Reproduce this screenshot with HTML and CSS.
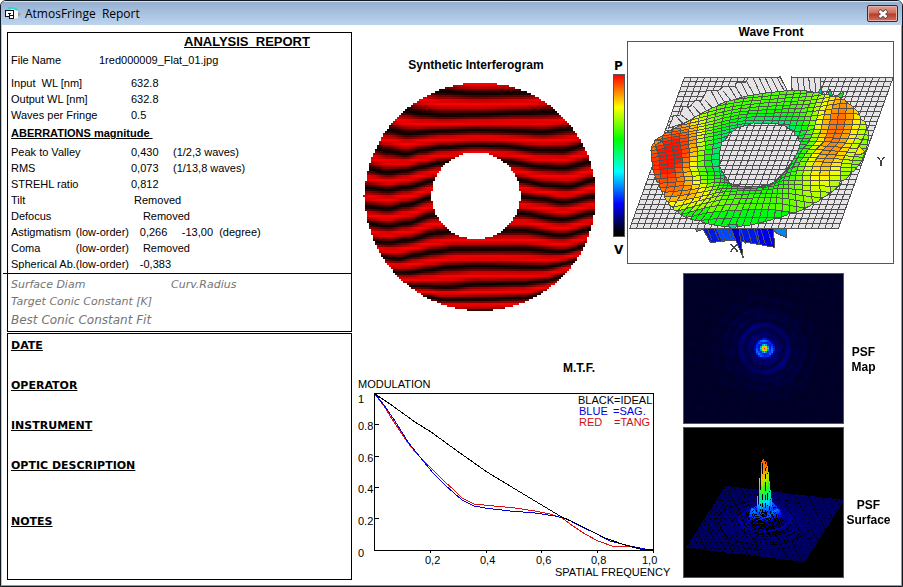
FILE: index.html
```html
<!DOCTYPE html>
<html lang="en">
<head>
<meta charset="utf-8">
<title>AtmosFringe Report</title>
<link rel="stylesheet" href="styles.css">
</head>
<body>
<div class="window">
  <header class="titlebar">
    <svg class="app-icon" viewBox="0 0 16 14" width="16" height="14" aria-hidden="true">
      <path d="M5 3 8 1l5 2v8l-4 1z" fill="#f4f4f4"/>
      <path d="M3 1h5l5 2" stroke="#2fd8dc" stroke-width="2" fill="none"/>
      <path d="M13 5l3 2-3 3z" fill="#9a9a9a"/>
      <path d="M1 4h8v8H5V10H1z" fill="#fff"/>
      <path d="M0 3.500h9M.500 3v7M0 9.500h5M3 6.500h3M8.500 3v9M4.500 6v6M4 11.500h5M5 8.500h3" fill="none" stroke="#111"/>
    </svg>
    <h1 class="title">AtmosFringe&nbsp; Report</h1>
    <button class="close" type="button" aria-label="Close">
      <svg viewBox="0 0 12 10" width="12" height="10" aria-hidden="true">
        <path d="M2 1.500 10 8.500M10 1.500 2 8.500" stroke="#5b4646" stroke-width="4.200"/>
        <path d="M2.500 2 9.500 8M9.500 2 2.500 8" stroke="#fff" stroke-width="2.600"/>
      </svg>
    </button>
  </header>

  <main class="content">
    <div class="sheets">
      <section class="sheet report">
        <h2 class="report-title">ANALYSIS&nbsp; REPORT</h2>
        <table class="data file">
          <tr><th scope="row">File Name</th><td>1red000009_Flat_01.jpg</td></tr>
        </table>
        <table class="data">
          <tr><th scope="row">Input&nbsp; WL [nm]</th><td>632.8</td></tr>
          <tr><th scope="row">Output WL [nm]</th><td>632.8</td></tr>
          <tr><th scope="row">Waves per Fringe</th><td>0.5</td></tr>
        </table>
        <h3 class="sub-title">ABERRATIONS magnitude&nbsp;</h3>
        <table class="data">
          <tr><th scope="row">Peak to Valley</th><td class="num">0,430</td><td>(1/2,3 waves)</td></tr>
          <tr><th scope="row">RMS</th><td class="num">0,073</td><td>(1/13,8 waves)</td></tr>
          <tr><th scope="row">STREHL ratio</th><td class="num">0,812</td><td></td></tr>
          <tr><th scope="row">Tilt</th><td colspan="2">&nbsp;Removed</td></tr>
        </table>
        <table class="data low-order">
          <tr><th scope="row">Defocus</th><td></td><td colspan="2">&nbsp;Removed</td></tr>
          <tr><th scope="row">Astigmatism</th><td class="order">(low-order)</td><td class="num">0,266</td><td>-13,00&nbsp; (degree)</td></tr>
          <tr><th scope="row">Coma</th><td class="order">(low-order)</td><td colspan="2">&nbsp;Removed</td></tr>
          <tr><th scope="row">Spherical Ab.</th><td class="order">(low-order)</td><td colspan="2">-0,383</td></tr>
        </table>
        <div class="conic">
          <p class="conic-row"><span class="diam">Surface Diam</span><span>Curv.Radius</span></p>
          <p class="conic-row">Target Conic Constant [K]</p>
          <p class="conic-row best">Best Conic Constant Fit</p>
        </div>
      </section>
      <section class="sheet notes">
        <h2 class="note">DATE</h2>
        <h2 class="note">OPERATOR</h2>
        <h2 class="note">INSTRUMENT</h2>
        <h2 class="note tall">OPTIC DESCRIPTION</h2>
        <h2 class="note">NOTES</h2>
      </section>
    </div>

    <div class="graphs">
      <section class="interferogram">
        <h2 class="caption">Synthetic Interferogram</h2>
        <canvas id="fringes" width="117" height="116"></canvas>
      </section>
      <div class="scale">
        <span>P</span>
        <div class="ramp"></div>
        <span>V</span>
      </div>
      <section class="wavefront">
        <h2 class="caption">Wave Front</h2>
        <svg id="wave" viewBox="81 63 801 669"></svg>
      </section>

      <section class="mtf">
        <h2 class="caption">M.T.F.</h2>
        <svg class="plot" viewBox="355 376 325 204" width="325" height="204">
          <rect x="374.500" y="393.500" width="279" height="157" fill="none" stroke="#000"/>
          <path d="M374 424.500h5M374 456.500h5M374 487.500h5M374 518.500h5M430.500 550v3M486.500 550v3M541.500 550v3M597.500 550v3M653.500 550v3" stroke="#000"/>
          <g fill="none" shape-rendering="crispEdges">
            <polyline stroke="#e01010" points="375,394 384,406 392,419 400,431 408,443 416,453 424,461 434,471 445,482 454,490 462,498 474,504 484,505 515,508 535,511 550,514 562,518 573,526 585,534 598,541 612,546 630,546 645,549 653,550"/>
            <polyline stroke="#0000d8" points="375,394 384,405 395,421 408,442 420,457 433,473 445,485 454,493 462,500 474,506 485,508 510,511 535,513 555,516 567,519 580,526 595,533 610,541 630,546 645,549 653,550"/>
            <polyline stroke="#000" points="375,394 390,404 415,422 431,432 460,453 487,472 515,489 540,504 560,516 575,523 595,533 605,538 625,545 640,549 653,550"/>
          </g>
          <g class="plot-text">
            <text x="358" y="388">MODULATION</text>
            <text x="358" y="403">1</text>
            <text x="358" y="430">0.8</text>
            <text x="358" y="462">0.6</text>
            <text x="358" y="493">0.4</text>
            <text x="358" y="525">0.2</text>
            <text x="358" y="557">0</text>
            <text x="425" y="564">0,2</text>
            <text x="480" y="564">0,4</text>
            <text x="536" y="564">0,6</text>
            <text x="591" y="564">0,8</text>
            <text x="642" y="564">1,0</text>
            <text x="555" y="576">SPATIAL FREQUENCY</text>
            <text x="578" y="404">BLACK=IDEAL</text>
            <text x="579" y="415" fill="#0000d8">BLUE</text>
            <text x="613" y="415" fill="#0000d8">=SAG.</text>
            <text x="579" y="426" fill="#d01010">RED</text>
            <text x="614" y="426" fill="#d01010">=TANG</text>
          </g>
        </svg>
      </section>

      <section class="psf">
        <div class="psf-row">
          <canvas id="psf-map" width="80" height="75"></canvas>
          <h2 class="caption">PSF<br>Map</h2>
        </div>
        <div class="psf-row">
          <canvas id="psf-surface" width="160" height="149"></canvas>
          <h2 class="caption low">PSF<br>Surface</h2>
        </div>
      </section>
    </div>
  </main>
</div>
<script src="script.js"></script>
</body>
</html>
```
FILE: styles.css
```css
* { box-sizing: border-box; }

body {
  margin: 0;
  background: #fff;
  color: #000;
  font: 11px/16px "Liberation Sans", Arial, sans-serif;
}

h1, h2, h3, p { margin: 0; font-size: inherit; }

.window {
  min-height: 100vh;
  display: flex;
  flex-direction: column;
  border: 1px solid #101820;
  border-radius: 6px 6px 0 0;
  box-shadow: inset -1px -1px 0 #2fc4dc, inset 1px 0 0 #b9c9dd;
  overflow: hidden;
}

.titlebar {
  display: flex;
  align-items: center;
  gap: 4px;
  height: 24px;
  padding: 0 4px;
  background: linear-gradient(#97b0d0, #a9c2e0 50%, #bcd3ec);
  border-top: 1px solid #d5e2f0;
}

.title {
  flex: 1;
  font: 12px/16px "Open Sans", "Noto Sans", sans-serif;
}

.close {
  display: flex;
  align-items: center;
  justify-content: center;
  width: 31px;
  height: 17px;
  padding: 0;
  border: 1px solid #5a1d1c;
  border-radius: 2px;
  background: linear-gradient(#e0a296, #cd6a5a 48%, #b83a28 52%, #d0705c);
  box-shadow: inset 0 0 0 1px #e5b0a6;
}

.content {
  flex: 1;
  display: flex;
  padding: 7px 2px 6px 6px;
}

.sheets {
  display: flex;
  flex-direction: column;
  flex: 0 0 345px;
  gap: 1px;
}

.sheet { border: 1px solid #000; }

.report { padding-top: 1px; }

.report-title {
  padding-left: 176px;
  font-size: 13px;
  line-height: 16px;
  text-decoration: underline;
}

.data {
  border-collapse: collapse;
  margin-left: 3px;
}

.data th, .data td {
  padding: 0;
  height: 16px;
  font-weight: normal;
  text-align: left;
  white-space: pre;
}

.data th { width: 120px; }
.data.file { margin: 2px 0 7px 3px; }
.file th { width: 88px; }
.data .num { width: 42px; }
.low-order th { width: 63px; }
.low-order .order { width: 64px; }

.sub-title {
  margin: 2px 3px;
  line-height: 17px;
  text-decoration: underline;
}

.conic {
  margin: 1px 0 0 -5px;
  border-top: 1px solid #000;
  padding: 2px 0 0 8px;
  color: #747474;
  font: italic 11px/17px "DejaVu Sans", Verdana, sans-serif;
}

.conic-row { display: flex; }
.diam { width: 160px; }
.best { font-size: 12px; line-height: 21px; }

.notes {
  flex: 1;
  padding: 4px 3px;
}

.note {
  height: 40px;
  font: bold 11px/16px "DejaVu Sans", Verdana, sans-serif;
  text-decoration: underline;
}

.note.tall { height: 56px; }

.graphs {
  flex: 1;
  display: grid;
  grid-template-columns: 260px 15px 56px 1fr;
  grid-template-rows: 232px 97px auto;
}

.caption {
  font-size: 12px;
  line-height: 15px;
  text-align: center;
}

.interferogram {
  grid-area: 1 / 1 / 3 / 2;
  padding-top: 26px;
}

.interferogram .caption { margin-right: 12px; }

#fringes {
  display: block;
  width: 234px;
  height: 232px;
  margin: 8px 0 0 11px;
  image-rendering: pixelated;
}

.scale {
  grid-area: 1 / 2;
  padding-top: 26px;
  font: bold 12px/16px "DejaVu Sans", Verdana, sans-serif;
}

.scale span { padding-left: 2px; }

.ramp {
  width: 12px;
  height: 163px;
  margin: 0 0 5px 1px;
  border: 1px solid #555;
  background: linear-gradient(#f00, #ff8000 10%, #ff0 20%, #0f0 40%, #0ff 60%, #00f 80%, #000 98%);
}

.wavefront {
  grid-area: 1 / 3 / 2 / 5;
  margin-top: -7px;
}

.wavefront .caption {
  width: 288px;
  margin-bottom: 1px;
}

#wave {
  display: block;
  width: 267px;
  height: 223px;
}

.mtf { grid-area: 3 / 1 / 4 / 4; }
.mtf .caption { padding-left: 123px; }
.mtf .plot { display: block; margin-left: 3px; }
.plot-text { font: 11px "Liberation Sans", Arial, sans-serif; }

.psf {
  grid-area: 2 / 4 / 4 / 5;
  display: flex;
  flex-direction: column;
  gap: 3px;
  padding-top: 9px;
}

.psf-row {
  display: grid;
  grid-template-columns: 161px 48px;
  align-items: center;
}

.psf-row canvas {
  display: block;
  width: 161px;
  height: 151px;
  border: 1px solid #555;
  image-rendering: pixelated;
}

.psf-row .caption { padding-top: 22px; margin-left: -9px; }
.psf-row .low { margin-left: 1px; padding-top: 20px; }
```
FILE: script.js
```js
// Smoothed interpolation through a list of [x, y] pairs.
function sample(points, x) {
  if (x <= points[0][0]) return points[0][1];
  for (let i = 1; i < points.length; i++) {
    if (x <= points[i][0]) {
      const [x0, y0] = points[i - 1], [x1, y1] = points[i];
      const t = (x - x0) / (x1 - x0), s = t * t * (3 - 2 * t);
      return y0 + (y1 - y0) * s;
    }
  }
  return points[points.length - 1][1];
}

// Colour ramp lookup; stops are [level, r, g, b].
function ramp(stops, v) {
  v = Math.max(stops[0][0], Math.min(stops[stops.length - 1][0], v));
  for (let i = 1; i < stops.length; i++) {
    if (v <= stops[i][0]) {
      const a = stops[i - 1], b = stops[i], t = (v - a[0]) / (b[0] - a[0]);
      return [1, 2, 3].map(k => Math.round(a[k] + (b[k] - a[k]) * t));
    }
  }
}

// Bell curve: 1 at zero, falling off over the given width.
function bell(d, width, power = 2) {
  return Math.exp(-Math.pow(Math.abs(d / width), power));
}

// Interferogram: centre lines of the dark fringes, top to bottom.
const fringes = [
  [[40, 60], [150, 95], [260, 124], [365, 130], [500, 128], [620, 105]],
  [[60, 150], [150, 182], [200, 191], [260, 196], [365, 194], [500, 189], [600, 186], [700, 180]],
  [[40, 225], [100, 240], [160, 250], [260, 243], [365, 240], [500, 243], [560, 246], [650, 236], [720, 228]],
  [[40, 288], [100, 303], [150, 312], [200, 301], [260, 292], [365, 287], [430, 288], [560, 300], [620, 301], [700, 284]],
  [[30, 356], [100, 368], [150, 362], [200, 350], [260, 338], [365, 326], [450, 335], [560, 350], [620, 353], [720, 334]],
  [[30, 413], [100, 420], [150, 412], [240, 392], [365, 375], [480, 390], [580, 406], [640, 410], [720, 390]],
  [[30, 470], [100, 476], [150, 465], [230, 443], [365, 435], [495, 440], [560, 446], [620, 456], [720, 440]],
  [[30, 520], [100, 528], [150, 520], [240, 494], [365, 488], [490, 490], [620, 508], [720, 490]],
  [[50, 575], [100, 578], [150, 571], [250, 548], [300, 542], [500, 541], [620, 556], [720, 536]],
  [[70, 620], [130, 627], [180, 615], [240, 605], [300, 598], [500, 597], [620, 605], [700, 588]],
  [[90, 665], [160, 668], [220, 660], [280, 651], [365, 648], [560, 652], [680, 632]],
  [[150, 708], [280, 712], [365, 703], [500, 700], [560, 695], [640, 676]],
  [[220, 740], [260, 748], [365, 748], [500, 745], [600, 724]],
  [[240, 786], [365, 784], [480, 782], [560, 768]]
];

(function drawFringes() {
  const canvas = document.getElementById("fringes");
  const g = canvas.getContext("2d");
  for (let i = 0; i < canvas.width; i++) {
    const x = 24 + i * 6 + 3;
    const ys = fringes.map(line => sample(line, x));
    for (let j = 0; j < canvas.height; j++) {
      const y = 93 + j * 6 + 3;
      const outer = ((x - 376) / 346) ** 2 + ((y - 440) / 342) ** 2;
      const inner = ((x - 363) / 133) ** 2 + ((y - 437) / 130) ** 2;
      if (outer > 1 || inner < 1) continue;
      const k = ys.findIndex(v => v > y);
      let t;
      if (k === 0) t = 1 - Math.min(.5, (ys[0] - y) / 56);
      else if (k < 0) t = (y - ys[ys.length - 1]) / 46;
      else t = (y - ys[k - 1]) / (ys[k] - ys[k - 1]);
      const level = Math.pow(Math.abs(Math.sin(Math.PI * t)), 1.5);
      const band = j % 2 ? 1 : .87;
      g.fillStyle = `rgb(${Math.round(8 + 247 * level * band)},0,0)`;
      g.fillRect(i, j, 1, 1);
    }
  }
  g.fillStyle = "#e00000";
  g.fillRect(0, 57, 2, 1);
})();

// Wave front mesh. Outlines are given every 22.5 degrees.
const outerEdge = [[795, 400], [750, 465], [655, 545], [540, 592], [405, 620], [288, 602], [222, 570], [178, 500],
  [155, 425], [165, 362], [255, 308], [385, 243], [540, 214], [655, 217], [735, 240], [800, 318]];
const innerEdge = [[597, 385], [575, 425], [545, 465], [510, 492], [455, 500], [400, 495], [380, 475], [362, 445],
  [357, 400], [375, 360], [405, 330], [450, 313], [515, 310], [555, 318], [585, 345], [597, 362]];
const surfaceRamp = [[.3, 0, 225, 170], [.42, 0, 235, 90], [.5, 0, 255, 0], [.62, 130, 255, 0], [.72, 255, 255, 0],
  [.82, 255, 160, 0], [.92, 255, 80, 0], [1, 255, 20, 0]];

(function drawWave() {
  const out = [];
  const ink = "#505050";
  const base = (u, v) => [484 + (u - .5) * 626 - (v - .5) * 165, 398 + (v - .5) * 455];
  const poly = (pts, fill) => out.push(`<polygon points="${pts.map(p => p.map(Math.round).join()).join(" ")}" fill="${fill}"/>`);
  const line = pts => out.push(`<polyline points="${pts.map(p => p.map(Math.round).join()).join(" ")}" fill="none"/>`);
  const edge = (table, a) => {
    const f = ((a / (2 * Math.PI) * 16) % 16 + 16) % 16, i = Math.floor(f) % 16, t = f - Math.floor(f);
    const p = table[i], q = table[(i + 1) % 16];
    const o = table[(i + 15) % 16], s = table[(i + 2) % 16];
    return [0, 1].map(k => .5 * (2 * p[k] + (q[k] - o[k]) * t + (2 * o[k] - 5 * p[k] + 4 * q[k] - s[k]) * t * t
      + (3 * p[k] - o[k] - 3 * q[k] + s[k]) * t * t * t));
  };

  // Parts of the surface below the reference plane.
  poly([[285, 626], [290, 634], [302, 630], [310, 626]], "#00b8e8");
  poly([[308, 626], [332, 668], [400, 660], [524, 682], [520, 626]], "#0018e0");
  poly([[350, 626], [365, 662], [402, 658], [392, 626]], "#0048ff");
  poly([[470, 626], [480, 674], [524, 682], [520, 626]], "#0000e8");
  poly([[518, 626], [530, 640], [558, 652], [558, 626]], "#0088f0");
  for (let x = 322; x < 510; x += 20) line([[x, 626], [x + 14, x < 420 ? 660 : 672]]);
  poly([[393, 626], [430, 715], [417, 626]], "#0000c0");

  // Reference plane.
  poly([base(0, 0), base(1, 0), base(1, 1), base(0, 1)], "#e6e4e6");
  const n = 31;
  for (let i = 0; i <= n; i++) {
    line([base(i / n, 0), base(i / n, 1)]);
    line([base(0, i / n), base(1, i / n)]);
  }

  // Flat cells stretched between the plane and the rear rim.
  const steps = [[222, 285], [240, 285], [250, 258], [272, 258], [285, 240], [305, 240], [320, 212], [355, 212],
    [372, 198], [406, 198], [410, 186], [438, 186], [445, 172], [540, 172]];
  poly([...steps, [566, 216], [385, 245], [255, 308], [205, 325]], "#e6e4e6");
  line(steps);
  for (let x = 225; x <= 540; x += 18) {
    const top = steps.filter(p => p[0] <= x).pop()[1];
    const foot = x + 24;
    line([[x, top], [foot, foot < 385 ? 308 - (foot - 255) * .5 : 243 - (foot - 385) * .16]]);
  }
  poly([[540, 170], [575, 170], [575, 216], [564, 216]], "#fff");
  out.push(`<path d="M543 170H573" stroke="#fff" stroke-width="6"/>`);
  poly([[575, 172], [662, 172], [662, 218], [575, 215]], "#e6e4e6");
  for (let x = 592; x < 662; x += 17) line([[x, 172], [x + 5, 216]]);
  poly([[575, 203], [582, 215], [575, 215]], "#0020d0");

  // Height estimate, which picks the cell colour.
  const level = (x, y, t) => {
    const red = bell(x - 212 + (y - 405) * .3, 84, 2) * bell(y - 405, 108);
    const orange = bell(x - 708 + (y - 320) * .3, 72, 1.8) * bell(y - 335, 165);
    const front = bell(x - 262, 95) * bell(y - 520, 45);
    return .57 + .5 * red + .34 * orange + .2 * front - .24 * Math.pow(1 - t, 3) - (y > 570 ? .09 : 0);
  };
  const place = (u, v) => {
    const du = u - .5, dv = v - .5, a = Math.atan2(dv, du), r = Math.hypot(du, dv);
    const t = Math.max(0, Math.min(1, (r - .19) / .28));
    const lower = Math.max(0, Math.sin(a + .2));
    const f = Math.pow(t, 1 + 1.1 * lower);
    const p = edge(innerEdge, a), q = edge(outerEdge, a);
    return [p[0] + (q[0] - p[0]) * f, p[1] + (q[1] - p[1]) * f, t];
  };
  const m = 32;
  for (let j = 0; j < m; j++) {
    for (let i = 0; i < m; i++) {
      const r = Math.hypot((i + .5) / m - .5, (j + .5) / m - .5);
      if (r < .185 || r > .48) continue;
      const c = [place(i / m, j / m), place((i + 1) / m, j / m), place((i + 1) / m, (j + 1) / m), place(i / m, (j + 1) / m)];
      const mid = [0, 1, 2].map(k => (c[0][k] + c[1][k] + c[2][k] + c[3][k]) / 4);
      poly(c.map(p => [p[0], p[1]]), `rgb(${ramp(surfaceRamp, level(...mid)).join()})`);
    }
  }

  // Small spikes along the rims.
  poly([[655, 218], [661, 204], [667, 220]], "#00d0c0");
  poly([[684, 224], [690, 208], [698, 226]], "#00d080");
  poly([[705, 230], [730, 217], [728, 232]], "#20e020");
  poly([[766, 402], [776, 378], [794, 395], [780, 405]], "#ffe800");
  poly([[163, 362], [186, 362], [166, 376]], "#ff9000");
  poly([[383, 613], [413, 613], [405, 626], [393, 626]], "#00d8a0");

  out.push(`<g fill="none" stroke="#444" stroke-width="4"><path d="M391 673 413 694M412 673 392 694M389 673h6M409 673h6M389 694h6M408 694h6"/><path d="M834 412 843 424 852 412M843 424V437M831 412h6M849 412h6M839 437h8"/></g>`);
  out.push(`<rect x="82.500" y="64.500" width="798" height="666" fill="none" stroke="#555"/>`);
  document.getElementById("wave").innerHTML =
    `<g stroke="${ink}" stroke-width="3" shape-rendering="crispEdges">${out.join("")}</g>`;
})();

// Point spread function with a central core and fading rings; r in pixels.
function psf(dx, dy, width, first) {
  const r = Math.hypot(dx, dy), a = Math.atan2(dy, dx);
  const lobe = (.19 + .04 * Math.cos(3 * a - 1.2)) * bell(r - first, first / 4);
  const rings = [[15, .04], [24, .06], [33, .02], [40, .02], [50, .01]]
    .reduce((s, [c, h]) => s + h * bell(r - c, 2.6) * (1 + .25 * Math.sin(2 * a)), 0);
  return bell(r, width) + lobe + rings + .04 * bell(r, 24);
}

const heat = [[0, 0, 0, 38], [.04, 0, 0, 80], [.1, 0, 0, 140], [.18, 0, 30, 230], [.28, 0, 130, 255], [.4, 0, 255, 230],
  [.52, 0, 255, 60], [.66, 170, 255, 0], [.78, 255, 200, 0], [.9, 255, 60, 0], [1, 255, 20, 0]];

(function drawMap() {
  const canvas = document.getElementById("psf-map");
  const g = canvas.getContext("2d");
  for (let j = 0; j < canvas.height; j++) {
    for (let i = 0; i < canvas.width; i++) {
      const ripple = .004 * (Math.sin(i * .9 + j * .3) + Math.sin(j * .8 - i * .2));
      g.fillStyle = `rgb(${ramp(heat, psf((i - 40) * 2, (j - 37) * 2, 3.8, 8.5) + ripple).join()})`;
      g.fillRect(i, j, 1, 1);
    }
  }
})();

(function drawSurface() {
  const canvas = document.getElementById("psf-surface");
  const g = canvas.getContext("2d");
  g.fillStyle = "#000";
  g.fillRect(0, 0, 160, 149);
  const rows = 122, cols = 119;
  const tall = [[.16, 0, 10, 250], [.26, 0, 110, 255], [.36, 0, 220, 255], [.46, 0, 240, 120], [.6, 60, 255, 0],
    [.74, 200, 230, 0], [.85, 255, 150, 0], [1, 255, 90, 0]];
  const colour = h => h < .16 ? [0, 0, Math.min(255, Math.round(95 + 1000 * h))] : ramp(tall, h);
  for (let j = 0; j <= rows; j++) {
    const v = j / rows;
    let previous = null;
    for (let i = 0; i <= cols; i++) {
      const u = i / cols;
      const x = Math.round(41 + 119 * u - 39 * v);
      const ground = Math.round(58 + 14 * u + 61 * v);
      const h = psf((u - .5) * 116, (v - .5) * 124, 5.5, 12.5);
      const y = Math.round(ground - h * 60);
      g.fillStyle = "#000";
      g.fillRect(x, y + 1, 1, Math.max(0, ground - y));
      const gap = (x * 3 + y * 5) % 13 === 0 || (x % 2 === 0 && y % 3 === 0 && (x + y) % 5 < 2);
      if (!(gap && h < .16)) {
        g.fillStyle = `rgb(${colour(h).join()})`;
        const reach = previous === null ? 1 : Math.max(1, Math.min(24, Math.abs(previous - y)));
        g.fillRect(x, previous === null ? y : Math.min(y, previous), 1, h > .16 ? reach : 1);
      }
      previous = y;
    }
  }
  // Tip and flanks of the central peak.
  for (let k = -6; k <= 6; k += 2) {
    const top = 31 + Math.abs(k) ** 1.6 * 2.1;
    for (let y = Math.round(top); y < 84; y++) {
      g.fillStyle = `rgb(${ramp(tall, (97 - y) / 64).join()})`;
      g.fillRect(79 + k, y, 1, 1);
    }
  }
  g.fillStyle = "#ff7000";
  [[77, 34, 6], [81, 34, 6], [78, 32, 3], [80, 32, 3]].forEach(([x, y, h]) => g.fillRect(x, y, 1, h));
})();
```
